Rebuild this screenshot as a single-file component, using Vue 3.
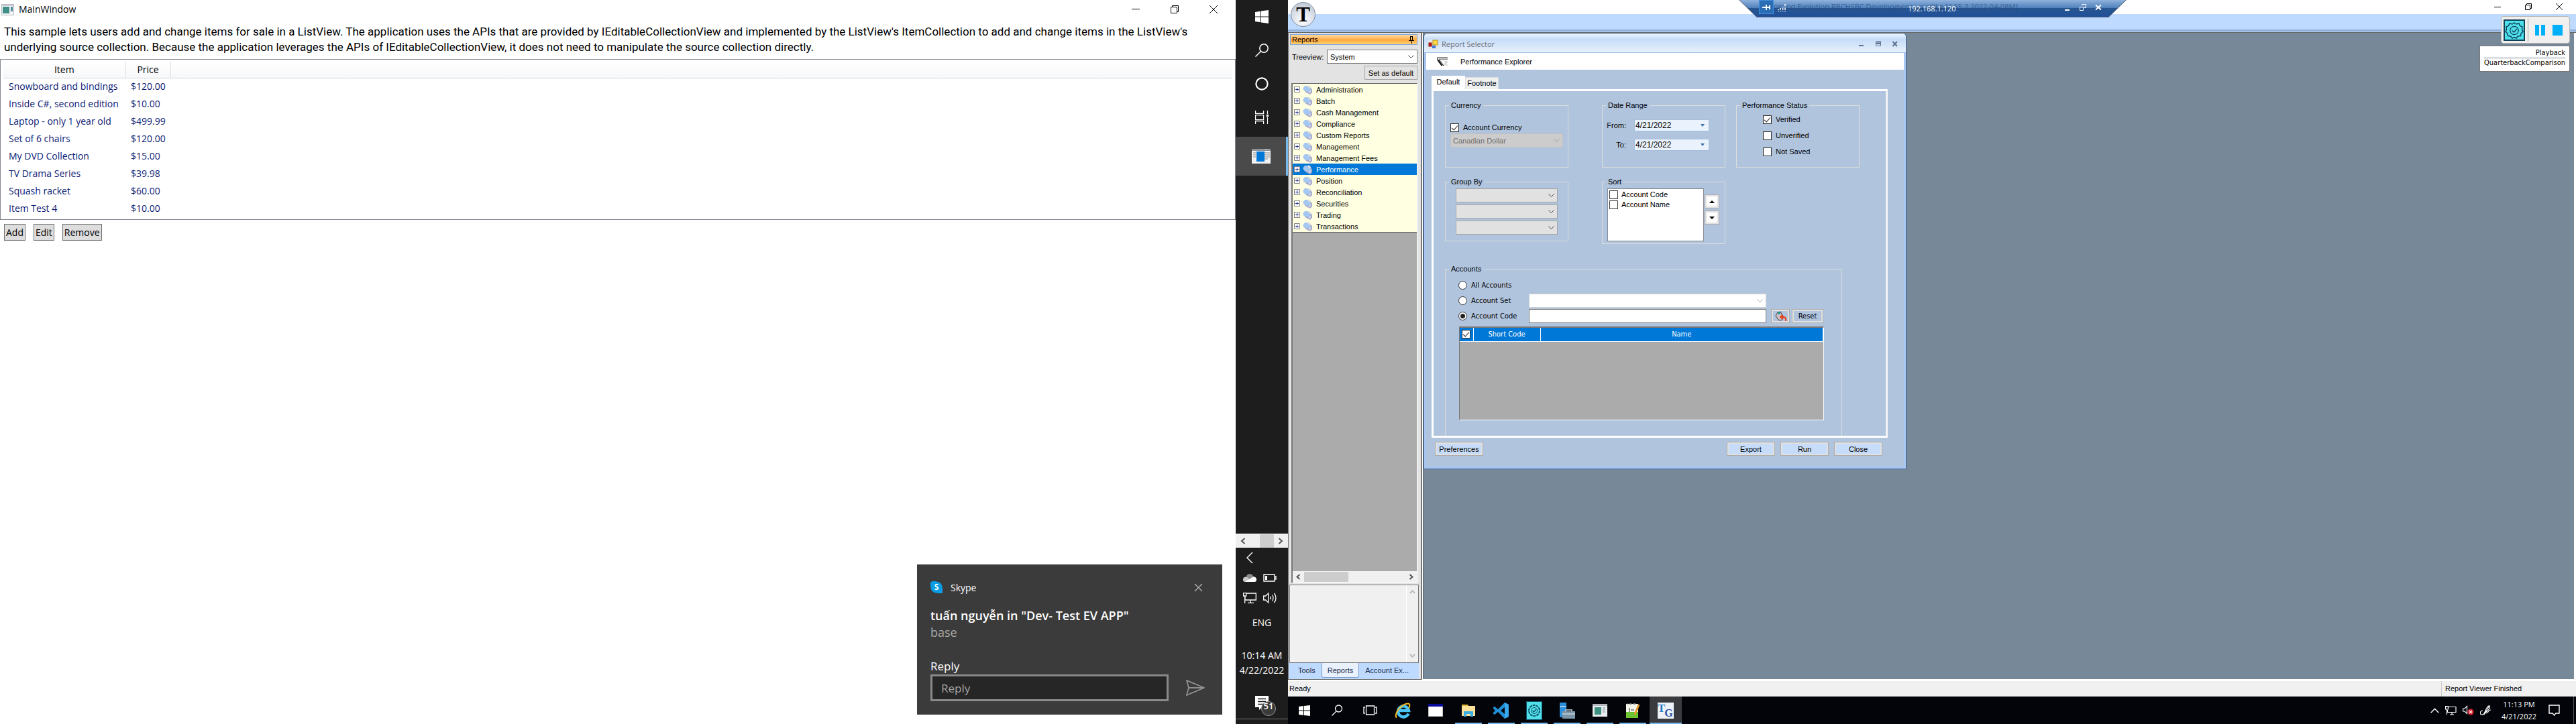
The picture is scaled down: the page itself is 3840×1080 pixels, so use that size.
<script setup>
import { ref } from 'vue'

const items = [
  ['Snowboard and bindings', '$120.00'],
  ['Inside C#, second edition', '$10.00'],
  ['Laptop - only 1 year old', '$499.99'],
  ['Set of 6 chairs', '$120.00'],
  ['My DVD Collection', '$15.00'],
  ['TV Drama Series', '$39.98'],
  ['Squash racket', '$60.00'],
  ['Item Test 4', '$10.00'],
]

const reports = [
  'Administration', 'Batch', 'Cash Management', 'Compliance', 'Custom Reports',
  'Management', 'Management Fees', 'Performance', 'Position', 'Reconciliation',
  'Securities', 'Trading', 'Transactions',
]
const activeReport = ref('Performance')

const dateFrom = ref('4/21/2022')
const dateTo = ref('4/21/2022')
const accountMode = ref('code')
</script>

<template>
  <div class="screens">
    <!-- Left desktop -->
    <section class="desk">
      <main class="win">
        <header class="win-title">
          <svg class="app-ico" viewBox="0 0 19 17" aria-hidden="true">
            <rect x="0.5" y="0.5" width="18" height="16" fill="#f4f4f6" stroke="#b9bcc4" />
            <rect x="1" y="1" width="17" height="2" fill="#c9ccd6" />
            <rect x="2" y="4" width="10" height="10" fill="#3f8f86" />
            <rect x="14" y="4" width="3" height="7" fill="#4f8f9a" />
          </svg>
          <h1>MainWindow</h1>
          <div class="win-btns">
            <button aria-label="Minimize"><svg viewBox="0 0 12 12"><path d="M0 5.5h12" /></svg></button>
            <button aria-label="Restore"><svg viewBox="0 0 12 12"><path d="M.5 2.5h9v9h-9zM2.500 2.500v-2h9v9h-2" /></svg></button>
            <button aria-label="Close"><svg viewBox="0 0 12 12"><path d="M0 0l12 12M12 0L0 12" /></svg></button>
          </div>
        </header>
        <p class="intro">This sample lets users add and change items for sale in a ListView. The application uses the APIs that are provided by IEditableCollectionView and implemented by the ListView's ItemCollection to add and change items in the ListView's<br>underlying source collection. Because the application leverages the APIs of IEditableCollectionView, it does not need to manipulate the source collection directly.</p>
        <div class="list">
          <table>
            <thead>
              <tr><th class="c-item">Item</th><th class="c-price">Price</th><th class="c-rest"></th></tr>
            </thead>
            <tbody>
              <tr v-for="i in items" :key="i[0]"><td>{{ i[0] }}</td><td>{{ i[1] }}</td><td></td></tr>
            </tbody>
          </table>
        </div>
        <div class="actions">
          <button>Add</button><button>Edit</button><button>Remove</button>
        </div>
      </main>

      <aside class="vbar">
        <button class="v-tile" aria-label="Start">
          <svg width="20" height="20" viewBox="0 0 20 20" fill="#fff"><path d="M0 3l8-1.200v7.700H0zM9 1.600L20 0v9.500H9zM0 10.500h8v7.700L0 17zM9 10.500h11V20L9 18.400z" /></svg>
        </button>
        <button class="v-tile" aria-label="Search">
          <svg width="20" height="20" viewBox="0 0 20 20" fill="none" stroke="#fff" stroke-width="1.500"><circle cx="13" cy="7" r="6.200" /><path d="M8.500 11.500L.5 19.500" /></svg>
        </button>
        <button class="v-tile" aria-label="Cortana">
          <svg width="20" height="20" viewBox="0 0 20 20" fill="none" stroke="#fff" stroke-width="2.200"><circle cx="10" cy="10" r="8.600" /></svg>
        </button>
        <button class="v-tile" aria-label="Task View">
          <svg width="20" height="20" viewBox="0 0 20 20" fill="none" stroke="#fff" stroke-width="1.200"><path d="M.6 0v4.400h12V0M.6 20v-4.400h12V20M.6 6.600h12v7H.6zM18.500 0v5M18.500 10v10" /><path d="M16.800 5.800h3.200v3.400h-3.200z" fill="#fff" stroke="none" /></svg>
        </button>
        <button class="v-tile active" aria-label="MainWindow">
          <svg width="28" height="22" viewBox="0 0 28 22">
            <rect width="28" height="22" fill="#f2f2f2" /><rect width="28" height="3" fill="#8f9296" />
            <path d="M20 1.500h6" stroke="#ddd" stroke-dasharray="1 1" />
            <path d="M2 6h4M2 9h4M2 12h4M19 6h8M19 9h8M19 12h8M19 15h5" stroke="#a9abae" stroke-width="1.500" />
            <rect x="7" y="4" width="12" height="15" fill="#0078d7" />
          </svg>
        </button>
        <div class="v-gap"></div>
        <div class="v-scroll">
          <svg width="8" height="10" viewBox="0 0 8 10"><path d="M6.500 1L2 5l4.500 4" /></svg>
          <i></i>
          <svg width="8" height="10" viewBox="0 0 8 10"><path d="M1.500 1L6 5 1.500 9" /></svg>
        </div>
        <div class="v-tray">
          <svg width="20" height="20" viewBox="0 0 20 20" fill="none" stroke="#fff" stroke-width="1.400"><path d="M14 2l-8 8 8 8" /></svg>
          <span></span>
          <svg width="20" height="20" viewBox="0 0 20 20"><path d="M5 9a5 5 0 0 1 9-3l3 3-10 3z" fill="#8c8c8c" /><path d="M0 13a4 4 0 0 1 6-4l7 5-6 2H3a3 3 0 0 1-3-3z" fill="#c9c9c9" /><path d="M3 16l11-7a4 4 0 0 1 6 4 3 3 0 0 1-3 3z" fill="#fff" /></svg>
          <svg width="20" height="20" viewBox="0 0 20 20" fill="none" stroke="#fff" stroke-width="1.400"><path d="M1 5h16v10H1zM17.500 8h1.500v4h-1.500" /><path d="M3 7h3v6H3z" fill="#fff" stroke="none" /></svg>
          <svg width="20" height="20" viewBox="0 0 20 20" fill="none" stroke="#fff" stroke-width="1.300"><path d="M5 3h14.300v10H3V8M.7 2.700h4V7h-4zM2.700 7v11M11 13v4M7 17.300h9" /></svg>
          <svg width="20" height="20" viewBox="0 0 20 20" fill="none" stroke="#fff" stroke-width="1.300"><path d="M.7 7h3l4-4v14l-4-4h-3zM10.500 8q1.500 2 0 4M13.500 5.500q3 4.500 0 9M16.500 3q5 7 0 14" /></svg>
        </div>
        <div class="v-text">ENG</div>
        <div class="v-clock">10:14 AM<br>4/22/2022</div>
        <button class="v-note" aria-label="Notifications">
          <svg width="34" height="32" viewBox="0 0 34 32"><path d="M2 1h20v17H12l-4 4v-4H2z" fill="#fff" /><path d="M6 5.500h12M6 9.500h12M6 13.500h9" stroke="#1d1d1d" stroke-width="1.400" /><circle cx="22" cy="20" r="10.500" fill="#3a3a3a" stroke="#9a9a9a" /></svg>
          <b>51</b>
        </button>
      </aside>

      <section class="toast">
        <header>
          <svg width="18" height="18" viewBox="0 0 18 18"><path d="M5 0a6 6 0 0 1 4 .5A8.500 8.500 0 0 1 17.500 10 5 5 0 0 1 10 17.500 8.500 8.500 0 0 1 .5 8 5 5 0 0 1 5 0z" fill="#0a9de6" /></svg>
          <b class="s-letter">S</b>
          <span>Skype</span>
          <button aria-label="Dismiss"><svg width="13" height="13" viewBox="0 0 13 13" fill="none" stroke="#b4b4b4" stroke-width="1.300"><path d="M1 1l11 11M12 1L1 12" /></svg></button>
        </header>
        <h2>tuấn nguyễn in "Dev- Test EV APP"</h2>
        <p>base</p>
        <label for="reply">Reply</label>
        <div class="reply">
          <input id="reply" type="text" placeholder="Reply">
          <button aria-label="Send"><svg width="28" height="24" viewBox="0 0 28 24" fill="none" stroke="#8f8f8f" stroke-width="1.800"><path d="M1 1l26 11L1 23l3-11zM4 12h23" /></svg></button>
        </div>
      </section>
    </section>

    <!-- Right desktop -->
    <section class="desk remote">
      <div class="app">
        <header class="app-title">
          <div class="win-btns small">
            <button aria-label="Minimize"><svg viewBox="0 0 12 12"><path d="M1 6.500h10" /></svg></button>
            <button aria-label="Restore"><svg viewBox="0 0 12 12"><path d="M1.500 3.500h7v7h-7zM3.500 3.500v-2h7v7h-2" /></svg></button>
            <button aria-label="Close"><svg viewBox="0 0 12 12"><path d="M1 1l10 10M11 1L1 11" /></svg></button>
          </div>
        </header>
        <div class="ribbon"></div>
        <div class="orb">T</div>

        <div class="work">
          <aside class="panel">
            <h2 class="panel-head">Reports
              <svg width="8" height="11" viewBox="0 0 8 11" fill="none" stroke="#000"><path d="M2.500.5v6M5.500.5v6M2 .5h4M0 6.500h8M4.500 7v4" /></svg>
            </h2>
            <div class="tv-row">
              <label for="tv">Treeview:</label>
              <div class="combo tv">
                <select id="tv"><option>System</option></select>
                <svg viewBox="0 0 9 5"><path d="M.5.5l4 4 4-4" /></svg>
              </div>
            </div>
            <button class="set-def">Set as default</button>
            <div class="tree">
              <ul>
                <li v-for="r in reports" :key="r" :class="{ on: r === activeReport }" @click="activeReport = r">
                  <svg class="plus" width="9" height="9" viewBox="0 0 9 9"><path d="M.5.5h8v8h-8z" fill="#fff" stroke="#848484" /><path d="M2 4.500h5M4.500 2v5" stroke="#26358c" /></svg>
                  <svg width="15" height="14" viewBox="0 0 15 14"><path d="M4 1l7 1 3 5v4l-3 3-6-3-4-4z" fill="#a9a9cc" /><path d="M3 1l6 1 3 5-3 3-6-1-3-4z" fill="#a3c8f2" /><path d="M7 .5l4 .5 1 4-3-1z" fill="#e2e2dc" /><path d="M9 10l3-2v2l-3 3z" fill="#dcdcf0" /></svg>
                  <span>{{ r }}</span>
                </li>
              </ul>
              <div class="hscroll">
                <svg width="8" height="9" viewBox="0 0 8 9"><path d="M6.500 1L2.500 4.500l4 3.500" /></svg>
                <i></i>
                <svg width="8" height="9" viewBox="0 0 8 9"><path d="M1.500 1l4 3.500-4 3.500" /></svg>
              </div>
            </div>
            <div class="desc">
              <div class="vscroll">
                <svg width="9" height="6" viewBox="0 0 9 6"><path d="M1 5l3.500-4L8 5" /></svg>
                <svg width="9" height="6" viewBox="0 0 9 6"><path d="M1 1l3.500 4L8 1" /></svg>
              </div>
            </div>
            <nav class="ptabs">
              <a href="#tools">Tools</a><a href="#reports" class="on">Reports</a><a href="#accounts">Account Ex...</a>
            </nav>
          </aside>

          <div class="mdi">
            <section class="dlg">
              <header class="dlg-title">
                <svg width="15" height="14" viewBox="0 0 15 14"><rect width="15" height="14" fill="#e6e6e6" /><rect x="1" y="5" width="4" height="5" fill="#d01010" stroke="#7c1010" /><rect x="7" y="1" width="7" height="7" fill="#ffd94a" stroke="#b58a10" /><rect x="6" y="9" width="5" height="4" fill="#3b78e0" /></svg>
                <h2>Report Selector</h2>
                <div class="dlg-btns">
                  <button aria-label="Minimize"><svg width="10" height="9" viewBox="0 0 10 9"><path d="M1 7h7" stroke-width="2" /></svg></button>
                  <button aria-label="Maximize"><svg width="10" height="9" viewBox="0 0 10 9"><path d="M1 1.500h8M1 4h8" stroke-width="2" /><path d="M1.500 1v6.500h7V1" /></svg></button>
                  <button aria-label="Close"><svg width="10" height="9" viewBox="0 0 10 9"><path d="M1.500 1l6.500 7M8 1L1.500 8" stroke-width="2" /></svg></button>
                </div>
              </header>
              <div class="dlg-head">
                <svg width="16" height="14" viewBox="0 0 16 14"><path d="M0 1h16" stroke="#222" /><path d="M3 3.500h13" stroke="#999" stroke-width="2" /><path d="M0 2l8 11M1 5l6 8M3 4l7 9" stroke="#111" fill="none" stroke-width="1.200" /><path d="M11 7h4v2h-3v3h4" stroke="#bbb" fill="none" /></svg>
                <span>Performance Explorer</span>
              </div>
              <div class="dlg-body">
                <nav class="dtabs"><a href="#default" class="on">Default</a><a href="#footnote">Footnote</a></nav>
                <form class="page" @submit.prevent>
                  <div class="groups">
                    <fieldset class="g-cur">
                      <legend>Currency</legend>
                      <label class="ck"><input type="checkbox" checked>Account Currency</label>
                      <div class="combo off">
                        <select aria-label="Currency" disabled><option>Canadian Dollar</option></select>
                        <svg viewBox="0 0 9 5"><path d="M.5.5l4 4 4-4" /></svg>
                      </div>
                    </fieldset>
                    <fieldset class="g-date">
                      <legend>Date Range</legend>
                      <div class="drow"><label for="df">From:</label><input id="df" v-model="dateFrom" type="text"><svg width="6" height="4" viewBox="0 0 6 4"><path d="M0 0h6L3 4z" /></svg></div>
                      <div class="drow"><label for="dt">To:</label><input id="dt" v-model="dateTo" type="text"><svg width="6" height="4" viewBox="0 0 6 4"><path d="M0 0h6L3 4z" /></svg></div>
                    </fieldset>
                    <fieldset class="g-perf">
                      <legend>Performance Status</legend>
                      <label class="ck"><input type="checkbox" checked>Verified</label>
                      <label class="ck"><input type="checkbox">Unverified</label>
                      <label class="ck"><input type="checkbox">Not Saved</label>
                    </fieldset>
                    <fieldset class="g-by">
                      <legend>Group By</legend>
                      <div v-for="n in 3" :key="n" class="combo">
                        <select :aria-label="'Group by ' + n"><option></option></select>
                        <svg viewBox="0 0 9 5"><path d="M.5.5l4 4 4-4" /></svg>
                      </div>
                    </fieldset>
                    <fieldset class="g-sort">
                      <legend>Sort</legend>
                      <div class="sort-row">
                        <div class="sort-list">
                          <label class="ck"><input type="checkbox">Account Code</label>
                          <label class="ck"><input type="checkbox">Account Name</label>
                        </div>
                        <div class="arrows">
                          <button type="button" aria-label="Move up"><svg width="8" height="4" viewBox="0 0 8 4"><path d="M0 4h8L4 0z" /></svg></button>
                          <button type="button" aria-label="Move down"><svg width="8" height="4" viewBox="0 0 8 4"><path d="M0 0h8L4 4z" /></svg></button>
                        </div>
                      </div>
                    </fieldset>
                  </div>
                  <fieldset class="g-acc">
                    <legend>Accounts</legend>
                    <div class="arow first"><label class="rd"><input v-model="accountMode" type="radio" value="all">All Accounts</label></div>
                    <div class="arow">
                      <label class="rd"><input v-model="accountMode" type="radio" value="set">Account Set</label>
                      <div class="combo wide">
                        <select aria-label="Account set"><option></option></select>
                        <svg viewBox="0 0 9 5"><path d="M.5.5l4 4 4-4" /></svg>
                      </div>
                    </div>
                    <div class="arow">
                      <label class="rd"><input v-model="accountMode" type="radio" value="code">Account Code</label>
                      <input class="code" type="text" aria-label="Account code value">
                      <button type="button" class="tool" aria-label="Look up"><svg width="17" height="16" viewBox="0 0 17 16"><path d="M4 2l4-1 5 8-4 5-4-1-4-6z" fill="#cfc3cc" stroke="#4a3a40" /><circle cx="6" cy="3" r="2" fill="#1d9a86" /><path d="M16 15c1-5-2-7-6-6M11 6L8 9l4 3" fill="none" stroke="#f03c14" stroke-width="2" /></svg></button>
                      <button type="button" class="tool reset">Reset</button>
                    </div>
                    <div class="grid">
                      <table>
                        <thead><tr><th class="k"><input type="checkbox" checked aria-label="Select all"></th><th class="sc">Short Code</th><th>Name</th></tr></thead>
                      </table>
                    </div>
                  </fieldset>
                </form>
                <footer class="dlg-foot">
                  <button class="first">Preferences</button><button>Export</button><button>Run</button><button>Close</button>
                </footer>
              </div>
            </section>
          </div>
        </div>

        <footer class="status"><span>Ready</span><span class="right">Report Viewer Finished</span></footer>
      </div>

      <footer class="hbar">
        <button class="h-tile" aria-label="Start"><svg width="17" height="16" viewBox="0 0 17 16" fill="#fff"><path d="M0 2l7-1v6.500H0zM8 1l9-1v7.500H8zM0 8.500h7V15l-7-1zM8 8.500h9V16l-9-1z" /></svg></button>
        <button class="h-tile" aria-label="Search"><svg width="17" height="17" viewBox="0 0 17 17" fill="none" stroke="#fff" stroke-width="1.300"><circle cx="10.500" cy="6" r="5" /><path d="M7 10L.5 16.500" /></svg></button>
        <button class="h-tile" aria-label="Task View"><svg width="21" height="15" viewBox="0 0 21 15" fill="none" stroke="#fff" stroke-width="1.300"><path d="M4.500 1h12v13h-12zM3 3H1v9h2M18 3h2v9h-2" /></svg></button>
        <button class="h-tile" aria-label="Internet Explorer"><svg width="24" height="24" viewBox="0 0 24 24" fill="none"><path d="M20.500 16.500a8 8 0 1 1 .5-4.500H6" stroke="#49c3f5" stroke-width="4.500" /><path d="M3 22.500C-2 18 9 2 20 1.500c4 .5 2 5 1 7" stroke="#f5b81c" stroke-width="2" /></svg></button>
        <button class="h-tile" aria-label="Console"><svg width="22" height="19" viewBox="0 0 22 19"><path d="M0 0h22v19H0z" fill="#fff" stroke="#888" /><path d="M0 0h22v4H0z" fill="#0b0b9c" /></svg></button>
        <button class="h-tile run" aria-label="File Explorer"><svg width="22" height="20" viewBox="0 0 22 20"><path d="M1 1h9l1 2h10v15H1z" fill="#fbe09a" /><path d="M1 1h9v2H1z" fill="#e5b73b" /><path d="M4 19v-8h14v8h-4v-4H8v4z" fill="#3aaee4" /></svg></button>
        <button class="h-tile run" aria-label="Visual Studio Code"><svg width="24" height="24" viewBox="0 0 24 24"><path d="M17 0l6 3v18l-6 3L7 14l-5 4-2-1v-2l3-3-3-3V7l2-1 5 4zM17 7l-6 5 6 5z" fill="#1f8fd8" fill-rule="evenodd" /><path d="M17 0l6 3v18l-6 3z" fill="#3aa6ec" /></svg></button>
        <button class="h-tile run" aria-label="Recorder"><svg width="24" height="28" viewBox="0 0 24 28" fill="none" stroke="#12506a"><rect x=".5" y=".5" width="23" height="27" fill="#4fe0ea" /><circle cx="12" cy="14" r="8" stroke-width="2" stroke-dasharray="4 1" /><circle cx="12" cy="14" r="4.500" /><path d="M9.500 14l2 2 3.500-4" stroke-width="1.500" /></svg></button>
        <button class="h-tile run" aria-label="Server Manager"><svg width="24" height="24" viewBox="0 0 24 24"><path d="M1 0h10v22H1z" fill="#2b8fdc" /><path d="M1 6h10" stroke="#fff" /><path d="M10 13v-2h9v2" stroke="#cfd8de" fill="none" stroke-width="1.500" /><path d="M5 13h19v11H5z" fill="#7d97a8" /><path d="M5 17h19" stroke="#e6eef2" /></svg></button>
        <button class="h-tile run" aria-label="MainWindow"><svg width="22" height="19" viewBox="0 0 22 19"><path d="M0 0h22v19H0z" fill="#eceef0" /><path d="M0 0h22v3H0z" fill="#b3b7bd" /><path d="M3 5h10v11H3z" fill="#3d8f80" /><path d="M15 6h4M15 9h4M15 12h4" stroke="#9aa" stroke-width="1.500" /></svg></button>
        <button class="h-tile run" aria-label="Notepad++"><svg width="22" height="24" viewBox="0 0 22 24"><path d="M1 2h18v21H1z" fill="#f4f6ec" /><path d="M1 14h18v9H1z" fill="#6cc531" /><path d="M3 2h14" stroke="#777" stroke-width="2" stroke-dasharray="1 1" /><path d="M6 8v6M8 11h5" stroke="#333" /><path d="M20 3l-6 15" stroke="#e59a2c" stroke-width="3" /></svg></button>
        <button class="h-tile run cur" aria-label="Toogood"><span class="tg"><b>T</b><b>G</b></span></button>
        <div class="h-tray">
          <svg width="13" height="8" viewBox="0 0 13 8" fill="none" stroke="#fff" stroke-width="1.400"><path d="M.7 7.300l5.800-6 5.800 6" /></svg>
          <svg width="17" height="14" viewBox="0 0 17 14" fill="none" stroke="#fff" stroke-width="1.200"><path d="M5 1.500h11v8H3.500V6M.6.6h3.800V5H.6zM2.500 5v8M10 10v3M7 13h6" /></svg>
          <svg width="17" height="15" viewBox="0 0 17 15" fill="none" stroke="#fff" stroke-width="1.200"><path d="M.6 5h2.400l3.500-3.500v11L3 9H.6z" /><circle cx="12" cy="10" r="4.500" fill="#e0202c" stroke="none" /><path d="M10 8l4 4M14 8l-4 4" /></svg>
          <svg width="17" height="16" viewBox="0 0 17 16" fill="none" stroke="#fff" stroke-width="1.200"><path d="M4 8c-4 0-5 5-2 6s5-3 6-6 4-8 6-7-2 8-5 9 1 3 3 0 2-3 4-3M6 14L13 2" /></svg>
          <div class="h-clock">11:13 PM<br>4/21/2022</div>
          <svg width="17" height="17" viewBox="0 0 17 17" fill="none" stroke="#fff" stroke-width="1.400"><path d="M1 1h15v12h-5l-2.500 3L6 13H1z" /></svg>
        </div>
      </footer>

      <div class="rdp">
        <svg class="rdp-bg" width="578" height="28" viewBox="0 0 578 28">
          <defs><linearGradient id="rg" x1="0" y1="0" x2="0" y2="1"><stop offset="0" stop-color="#8fb2dd" /><stop offset=".46" stop-color="#4f80ba" /><stop offset=".47" stop-color="#28568f" /><stop offset="1" stop-color="#1f4f9c" /></linearGradient></defs>
          <path d="M0 0h578l-27 26H27z" fill="url(#rg)" /><path d="M1 0l26 25.500h524L577 0" fill="none" stroke="#5a6270" />
        </svg>
        <span class="ghost">Toogood Evolution RBCHSBC Development - reallike [4.55.2 2022-04-08M]</span>
        <button class="pin" aria-label="Pin"><svg width="12" height="8" viewBox="0 0 12 8" stroke="#fff" stroke-width="2"><path d="M0 4h5M6 0v8M6 4h5M11 1v6" /></svg></button>
        <svg class="sig" width="12" height="12" viewBox="0 0 12 12" stroke="#fff" stroke-width="2" stroke-dasharray="1 1"><path d="M1 12V9M4 12V7M7.500 12V4M11 12V0" /></svg>
        <span class="ip">192.168.1.120</span>
        <div class="rdp-btns">
          <button aria-label="Minimize"><svg width="10" height="10" viewBox="0 0 10 10"><path d="M1 9h7" stroke-width="2" /></svg></button>
          <button aria-label="Restore"><svg width="10" height="10" viewBox="0 0 10 10"><path d="M.5 4.500h5v5h-5zM3.500 2V.5h6v5H7" /></svg></button>
          <button aria-label="Close"><svg width="10" height="10" viewBox="0 0 10 10"><path d="M1 1.500l8 7M9 1.500l-8 7" stroke-width="2" /></svg></button>
        </div>
      </div>

      <div class="play">
        <svg width="32" height="32" viewBox="0 0 32 32" fill="none" stroke="#0e4257"><rect x="1" y="1" width="30" height="30" fill="#4fe0ec" stroke-width="2" /><path d="M16 5l3 2 4-1 1.500 3.500L28 11l-.5 4 1.500 3-3 3-.5 3.500-4 .5-2.500 3-3-1.500-3 1.500-2.500-3-4-.5-.5-3.500-3-3 1.500-3L4 11l3.500-1.500L9 6l4 1z" stroke-width="1.500" /><circle cx="16" cy="16.500" r="6.200" stroke-width="1.300" /><path d="M12.500 16.500l3 2.500 4.500-5" stroke-width="1.500" /></svg>
        <i></i>
        <button aria-label="Pause"><svg width="15" height="16" viewBox="0 0 15 16" fill="#00b0fa"><path d="M0 0h6v16H0zM9 0h6v16H9z" /></svg></button>
        <button aria-label="Stop"><svg width="15" height="16" viewBox="0 0 15 16" fill="#00b0fa"><path d="M0 0h15v16H0z" /></svg></button>
      </div>
      <div class="tip"><div>Playback</div><div class="ln">QuarterbackComparison</div></div>
    </section>
  </div>
</template>

<style>
body { margin: 0; background: #fff; }
</style>

<style scoped>
* { box-sizing: border-box; }
button, input, select { font: inherit; color: inherit; margin: 0; }
button { padding: 0; border: 0; background: none; }
a { color: inherit; text-decoration: none; }
h1, h2, p, ul { margin: 0; padding: 0; font-weight: 400; }
svg { display: block; flex: none; }

.screens { display: flex; min-height: 100vh; font-family: "Open Sans", "Noto Sans", sans-serif; color: #000; }
.desk { flex: 1 1 0; min-width: 0; display: flex; position: relative; overflow: hidden; }

/* MainWindow */
.win { flex: 1; min-width: 0; display: flex; flex-direction: column; background: #fff; }
.win-title { display: flex; align-items: center; height: 28px; padding: 0 4px 0 2px; }
.app-ico { width: 19px; height: 17px; }
.win-title h1 { flex: 1; margin-left: 7px; font-size: 14px; line-height: 20px; }
.win-btns { display: flex; }
.win-btns button { width: 58px; height: 28px; display: grid; place-items: center; }
.win-btns svg { width: 12px; height: 12px; fill: none; stroke: #000; }
.intro { margin-top: 8px; padding-left: 6px; font-family: Roboto, "Open Sans", sans-serif; font-size: 17px; line-height: 23px; white-space: nowrap; }
.list { margin-top: 6px; height: 240px; border: 1px solid #828790; padding: 3px 4px; font-size: 14px; }
.list table { width: 100%; border-collapse: collapse; table-layout: fixed; }
.list th { height: 24px; padding: 0; font-weight: 400; border-right: 1px solid #dcdfe1; border-bottom: 1px solid #d5d5d5; background: linear-gradient(#fff, #f7f8fa); line-height: 20px; }
.list .c-item { width: 182px; }
.list .c-price { width: 67px; }
.list .c-rest { border-right: 0; }
.list td { height: 26px; padding: 0 0 0 8px; line-height: 20px; color: #0c2074; white-space: nowrap; }
.actions { display: flex; gap: 12px; padding: 6px; }
.actions button { height: 25px; padding: 0 2px; border: 1px solid #707070; background: #ddd; font-size: 14px; line-height: 20px; }

/* Vertical taskbar */
.vbar { width: 78px; display: flex; flex-direction: column; background: #1d1d1d; color: #fff; font-size: 14px; }
.v-tile { display: grid; place-items: center; width: 78px; height: 50px; flex: none; }
.v-tile.active { height: 58px; margin-top: 4px; background: #4a4a4a; border-right: 3px solid #76b9ed; }
.v-gap { flex: 1; }
.v-scroll { display: flex; align-items: center; height: 21px; padding: 0 7px; background: #f0f0f0; border-top: 1px solid #fff; }
.v-scroll i { width: 21px; height: 20px; margin-left: 21px; margin-right: 6px; background: #cdcdcd; }
.v-scroll svg { fill: none; stroke: #555; stroke-width: 2; }
.v-tray { display: grid; grid-template-columns: 20px 20px; column-gap: 10px; row-gap: 10px; padding: 5px 0 0 11px; }
.v-text { margin-top: 17px; height: 20px; line-height: 20px; text-align: center; }
.v-clock { margin-top: 28px; line-height: 22px; text-align: center; }
.v-note { position: relative; display: block; height: 40px; margin: 22px 0 7px; padding-left: 27px; border-bottom: 1px solid #777; color: #fff; }
.v-note b { position: absolute; left: 38px; top: 9px; width: 22px; line-height: 22px; font-size: 13px; font-weight: 600; text-align: center; }

/* Toast */
.toast { position: absolute; right: 98px; bottom: 14px; width: 455px; height: 224px; padding: 20px 20px 0; background: #3b3b3b; color: #fff; display: flex; flex-direction: column; }
.toast header { position: relative; display: flex; align-items: center; height: 28px; font-size: 14px; }
.toast header span { flex: 1; margin-left: 12px; }
.toast header button { width: 31px; height: 28px; display: grid; place-items: center; }
.s-letter { position: absolute; left: 0; width: 18px; text-align: center; font-size: 12px; line-height: 28px; }
.toast h2 { margin-top: 16px; font-size: 18px; line-height: 24px; font-weight: 600; white-space: nowrap; }
.toast p { font-size: 18px; line-height: 26px; color: #a9a9a9; }
.toast label { margin-top: 26px; font-size: 17px; line-height: 24px; }
.reply { display: flex; align-items: center; }
.reply input { width: 355px; height: 40px; padding: 0 13px; border: 3px solid #8a8a8a; background: #262626; font-size: 17px; outline: 0; }
.reply input::placeholder { color: #a4a4a4; opacity: 1; }
.reply button { margin-left: 26px; }

/* Remote desktop */
.remote { flex-direction: column; font-family: "Liberation Sans", Arial, sans-serif; font-size: 11px; line-height: 14px; }
.app { flex: 1; display: flex; flex-direction: column; position: relative; }
.app-title { height: 21px; display: flex; justify-content: flex-end; background: #fff; }
.win-btns.small { padding-right: 2px; }
.win-btns.small button { width: 46px; height: 19px; }
.ribbon { height: 28px; background: linear-gradient(#bedaff 0 23px, #8fb0dd 23px 25px, #a9bfdd 25px 27px, #666 27px); }
.orb { position: absolute; left: 4px; top: 3px; width: 37px; height: 37px; border: 1px solid #7f8ea3; border-radius: 50%; background: radial-gradient(circle at 50% 75%, #fff, #d4dae4 60%, #b2bccb); font: 700 31px/35px "Liberation Serif", "Times New Roman", serif; text-align: center; }
.work { flex: 1; display: flex; min-height: 0; }

.panel { width: 200px; display: flex; flex-direction: column; background: #e3e3e3; border-left: 1px solid #777; border-right: 2px solid #777; border-bottom: 1px solid #666; padding: 2px 0 0; }
.panel-head { display: flex; justify-content: space-between; align-items: center; margin: 0 5px 0 2px; height: 16px; padding: 0 4px 0 2px; font-size: 11px; border: 1px solid #7ba6e0; background: linear-gradient(#ffd9a0, #ffa940 55%, #ffd271); }
.tv-row { display: flex; align-items: center; margin-top: 7px; padding-left: 5px; }
.tv-row label { width: 52px; }
.combo { position: relative; height: 21px; }
.combo select { appearance: none; display: block; width: 100%; height: 100%; padding: 0 4px; border: 1px solid #a6a6a6; border-radius: 0; background: #e1e1e1; outline: 0; }
.combo svg { position: absolute; right: 5px; top: 8px; width: 9px; height: 5px; fill: none; stroke: #444; pointer-events: none; }
.combo.tv { width: 135px; }
.combo.tv select { background: #fff; border-color: #7a7a7a; }
.set-def { align-self: flex-end; margin: 3px 5px 0 0; width: 79px; height: 21px; border: 1px solid #a6a6a6; background: #e3e3e3; }
.tree { flex: 1; display: flex; flex-direction: column; margin: 5px 5px 0 4px; border: 1px solid #fff; border-top-color: #666; border-left: 2px solid #777; background: #ababab; }
.tree ul { list-style: none; background: #ffffe1; border-bottom: 1px solid #666; }
.tree li { display: flex; align-items: center; height: 17px; padding-left: 2px; }
.tree li .plus { margin-right: 4px; }
.tree li span { margin-left: 4px; padding: 0 1px; }
.tree li.on { background: #0078d7; color: #fff; }
.hscroll { display: flex; align-items: center; margin-top: auto; height: 17px; padding: 0 4px; background: #f0f0f0; }
.hscroll i { width: 66px; height: 15px; margin-left: 5px; margin-right: auto; background: #cdcdcd; }
.hscroll svg, .vscroll svg { fill: none; stroke: #555; stroke-width: 2; }
.desc { height: 117px; margin: 2px 3px 0 1px; border: 1px solid #777; background: #f0f0f0; }
.vscroll { margin-left: auto; width: 18px; height: 100%; display: flex; flex-direction: column; justify-content: space-between; align-items: center; padding: 7px 0; border-left: 1px solid #fff; }
.vscroll svg { stroke: #bcbcbc; }
.ptabs { display: flex; height: 24px; margin-right: 3px; background: #bedaff; line-height: 22px; text-align: center; color: #1b2a4a; }
.ptabs a { height: 22px; padding: 0 9px; }
.ptabs a:first-child { padding-left: 14px; }
.ptabs a.on { padding: 0 8px; border: 1px solid #7c9cd0; border-top: 0; border-radius: 0 0 3px 3px; background: #e9f1fc; }

.mdi { flex: 1; position: relative; margin: 0 3px 1px 1px; border-left: 1px solid #5b6670; background: #778899; }
.status { display: flex; height: 25px; padding-left: 2px; border-top: 2px solid #fff; background: #f0f0f0; line-height: 23px; }
.status .right { margin-left: auto; width: 201px; padding-left: 5px; border-left: 1px solid #ccc; }

/* Report Selector window */
.dlg { position: absolute; left: 0; top: 0; width: 720px; display: flex; flex-direction: column; border: 1px solid #3d5f94; border-radius: 6px 6px 0 0; background: #a9c6f0; overflow: hidden; }
.dlg-title { display: flex; align-items: center; height: 29px; padding: 3px 11px 0 6px; background: linear-gradient(#f0f6fd, #c5dcf8 30%, #e8f1fd); border-bottom: 1px solid #9dbdea; font-family: "Open Sans", "Noto Sans", sans-serif; color: #666f7c; }
.dlg-title h2 { flex: 1; margin-left: 5px; font-size: 11px; line-height: 16px; }
.dlg-btns { display: flex; gap: 15px; }
.dlg-btns svg { fill: none; stroke: #5c7391; }
.dlg-head { display: flex; align-items: center; gap: 19px; height: 25px; margin: 0 3px; padding-left: 16px; background: #fff; }
.dlg-body { margin: 0 3px 4px; padding: 9px 24px 15px 8px; background: #b0c4de; }
.dtabs { display: flex; align-items: flex-end; height: 20px; }
.dtabs a { width: 50px; height: 18px; border: 1px solid #dcdcdc; border-bottom: 0; background: #f0f0f0; line-height: 17px; text-align: center; }
.dtabs a.on { height: 20px; background: #fff; border-color: #fff; }
.page { height: 520px; border: 3px solid #fff; border-right-color: #f4f4f4; padding: 15px 0 0 17px; overflow: hidden; }
.groups { display: grid; grid-template-columns: 234px 200px 184px; grid-template-rows: 99px 99px; row-gap: 15px; align-items: start; }
fieldset { --pad: 0px; min-width: 0; width: 184px; height: 99px; margin: 0; padding: 0 0 0 var(--pad); border: 1px solid #dcdcdc; }
legend { height: 12px; margin-left: calc(5px - var(--pad)); padding: 0 3px; line-height: 12px; }
.ck, .rd { display: flex; align-items: center; gap: 6px; height: 13px; line-height: 13px; white-space: nowrap; }
input[type=checkbox], input[type=radio] { appearance: none; flex: none; width: 13px; height: 13px; border: 1px solid #333; background: #fff; display: grid; place-items: center; }
input[type=checkbox]:checked::after { content: ""; width: 4px; height: 8px; margin-top: -2px; border: solid #222; border-width: 0 1px 1px 0; transform: rotate(42deg); }
input[type=radio] { border-radius: 50%; }
input[type=radio]:checked::after { content: ""; width: 7px; height: 7px; border-radius: 50%; background: #222; }

.g-cur { --pad: 7px; }
.g-cur .ck { margin-top: 21px; }
.g-cur .combo { margin-top: 2px; width: 168px; }
.combo.off select { background: #ccc; border-color: #bfbfbf; color: #6d6d6d; opacity: 1; padding: 0 3px; }
.combo.off svg { stroke: #999; }
.g-date .drow { position: relative; display: flex; align-items: center; height: 18px; margin-bottom: 11px; }
.g-date .drow:nth-child(2) { margin-top: 15px; }
.drow label { width: 35px; margin-right: 12px; text-align: right; }
.drow input { width: 112px; height: 18px; padding: 0 1px; border: 1px solid #a7bfdd; border-radius: 0; background: #eaf3fd; font-size: 12px; outline: 0; }
.drow svg { position: absolute; left: 146px; top: 7px; fill: #3f6ea8; }
.g-perf { --pad: 39px; }
.g-perf .ck { margin-bottom: 11px; }
.g-perf .ck:nth-child(2) { margin-top: 9px; }
.g-by { --pad: 15px; height: 95px; }
.g-by .combo { width: 152px; margin-bottom: 3px; }
.g-by .combo:nth-child(2) { margin-top: 4px; }
.sort-row { display: flex; gap: 1px; margin: 4px 0 0 7px; }
.sort-list { width: 144px; height: 79px; padding: 2px; border: 1px solid #828790; background: #fff; display: flex; flex-direction: column; gap: 2px; }
.sort-list .ck { gap: 5px; }
.arrows { display: flex; flex-direction: column; gap: 3px; margin-top: 9px; }
.arrows button { width: 22px; height: 21px; display: grid; place-items: center; border: 1px solid #adadad; box-shadow: inset 0 0 0 2px #e1e1e1; background: #fff; }
.g-acc { --pad: 19px; width: 592px; height: 264px; margin-top: 31px; border-bottom: 0; font-family: "DejaVu Sans Condensed", "Noto Sans", sans-serif; }
.g-acc legend { font-family: "Liberation Sans", Arial, sans-serif; }
.arow { display: flex; align-items: center; margin-bottom: 2px; height: 21px; }
.arow.first { margin-top: 8px; }
.arow .rd { width: 105px; }
.combo.wide { width: 354px; }
.combo.wide select { background: #fff; border-color: #d0d0d0; }
.combo.wide svg { stroke: #aaa; }
.code { width: 354px; height: 21px; border: 1px solid #7a7a7a; background: #fff; outline: 0; }
.tool { width: 28px; height: 21px; margin-left: 7px; display: grid; place-items: center; border: 1px solid #adadad; box-shadow: inset 0 0 0 2px #e1e1e1; background: #b0c4de; }
.tool.reset { width: 47px; margin-left: 3px; }
.grid { width: 544px; height: 140px; margin-top: 5px; margin-left: 1px; border: 1px solid #fff; border-top: 2px solid #777; border-left: 1px solid #777; background: #ababab; }
.grid table { width: 100%; border-collapse: collapse; table-layout: fixed; background: #0078d7; color: #fff; border-bottom: 1px solid #666; }
.grid th { height: 20px; padding: 0; font-weight: 400; border-right: 1px solid #fff; border-bottom: 1px solid #fff; }
.grid .k { width: 20px; padding-left: 3px; }
.grid .sc { width: 100px; }
.dlg-foot { display: flex; gap: 8px; margin-top: 6px; padding: 0 8px 0 5px; }
.dlg-foot button { width: 72px; height: 21px; border: 1px solid #adadad; box-shadow: inset 0 0 0 2px #e1e1e1; background: #c7dcf8; }
.dlg-foot .first { margin-right: auto; }

/* Horizontal taskbar */
.hbar { display: flex; height: 41px; background: #020409; color: #fff; font-family: "Open Sans", "Noto Sans", sans-serif; }
.h-tile { width: 48px; height: 41px; margin-right: 1px; display: grid; place-items: center; }
.h-tile.run { background: linear-gradient(#76b9ed, #76b9ed) center bottom / 40px 2px no-repeat; }
.h-tile.cur { background: linear-gradient(#76b9ed 0 0) center bottom / 48px 2px no-repeat, #3a3b3e; }
.tg { display: flex; width: 24px; height: 24px; background: #eef3fa; font: 700 17px/18px "Liberation Serif", serif; color: #1e7ac0; }
.tg b:last-child { margin-left: -1px; align-self: flex-end; font-size: 16px; line-height: 16px; color: #2b4f9e; }
.h-tray { display: flex; align-items: center; gap: 9px; margin-left: auto; margin-right: 3px; padding-right: 20px; border-right: 1px solid #555; }
.h-clock { margin: 0 8px 0 5px; width: 54px; font-size: 11px; line-height: 18px; text-align: center; }

/* Connection bar */
.rdp { position: absolute; left: 672px; top: 0; width: 578px; height: 28px; color: #fff; font-family: "Open Sans", "Noto Sans", sans-serif; font-size: 11px; line-height: 16px; }
.rdp-bg, .ghost, .pin, .sig, .ip, .rdp-btns { position: absolute; }
.rdp-bg { left: 0; top: 0; }
.ghost { left: 39px; top: 2px; font-size: 11px; color: #1c427a; opacity: .6; white-space: nowrap; }
.pin { left: 30px; top: 0; width: 22px; height: 21px; display: grid; place-items: center; border: 1px solid #3f8fdc; background: #2b6db5; }
.sig { left: 58px; top: 5px; }
.ip { left: 252px; top: 5px; }
.rdp-btns { right: 37px; top: 6px; display: flex; gap: 13px; }
.rdp-btns svg { fill: none; stroke: #fff; stroke-width: 1; }

/* Playback */
.play { position: absolute; right: 9px; top: 24px; width: 103px; height: 41px; display: flex; align-items: center; padding: 0 10px 0 3px; border: 1px solid #b5b5b5; border-radius: 4px; background: #f1f0ef; }
.play i { width: 1px; height: 34px; margin: 0 10px 0 4px; background: #9a9a9a; }
.play button + button { margin-left: 11px; }
.tip { position: absolute; right: 9px; top: 68px; padding: 3px 6px 5px; border: 1px solid #777; background: #fff; font-family: "DejaVu Sans Condensed", "Noto Sans", sans-serif; text-align: right; line-height: 14px; }
.tip .ln { border-top: 1px solid #778899; }
</style>
